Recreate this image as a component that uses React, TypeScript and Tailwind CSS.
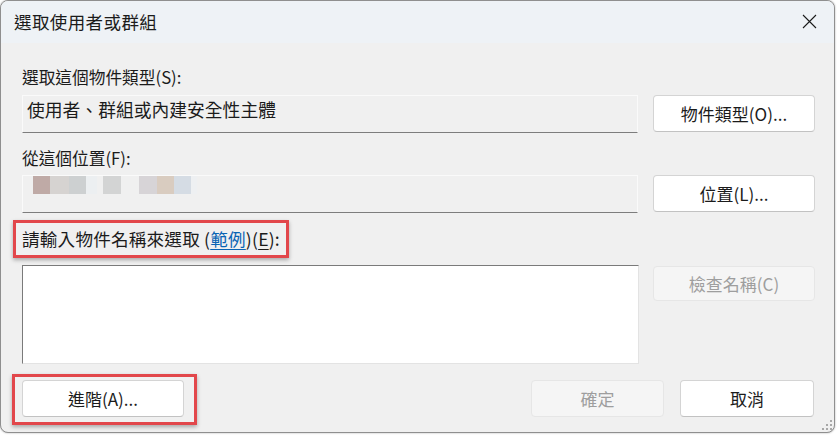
import React from 'react';

const FONT = "font-['Segoe_UI','Noto_Sans_CJK_TC','Noto_Sans',sans-serif]";

const blurBlocks: { w: number; c: string; gap?: number }[] = [
  { w: 17, c: '#bfaaa6' },
  { w: 19, c: '#d6d3d1' },
  { w: 17, c: '#cdd0d1' },
  { w: 11, c: '#eceff1' },
  { w: 6, c: 'transparent' },
  { w: 18, c: '#d3d4d4' },
  { w: 18, c: 'transparent' },
  { w: 18, c: '#d7d4d7' },
  { w: 17, c: '#d9ccc0' },
  { w: 17, c: '#d5dce4' },
  { w: 6, c: '#eef0f2' },
];

function Button({
  children,
  disabled,
  className,
}: {
  children: React.ReactNode;
  disabled?: boolean;
  className?: string;
}): React.JSX.Element {
  return (
    <button
      type="button"
      className={
        'flex items-center justify-center rounded-[4px] border text-[17px] leading-none ' +
        (disabled
          ? 'bg-[#f5f5f5] border-[#e6e6e6] text-[#9e9e9e] '
          : 'bg-white border-[#d4d4d4] border-b-[#c2c2c2] text-[#1b1b1b] ') +
        (className ?? '')
      }
    >
      {children}
    </button>
  );
}

export default function App(): React.JSX.Element {
  return (
    <div className="min-h-screen bg-white">
      <div
        className={`${FONT} relative w-[835px] h-[433px] rounded-[8px] border border-[#8f8f8f] bg-[#f0f0f0] overflow-hidden flex flex-col text-[#1b1b1b] shadow-[0_0_2px_rgba(0,0,0,0.35)]`}
      >
        {/* title bar */}
        <div className="h-[42px] bg-[#eef2f6] flex items-center justify-between pl-[13px] pr-[17px] pb-[1px]">
          <span className="text-[17.5px] leading-none tracking-[0.4px]">選取使用者或群組</span>
          <svg width="15" height="15" viewBox="0 0 15 15" className="text-[#1b1b1b]">
            <path d="M1 1 L14 14 M14 1 L1 14" stroke="currentColor" strokeWidth="1.1" fill="none" />
          </svg>
        </div>

        <div className="flex-1 pl-[21px] pt-[22px] flex flex-col">
          {/* object type */}
          <div className="h-[24px] leading-[24px] text-[16.7px]">選取這個物件類型(S):</div>
          <div className="mt-[6px] flex items-start">
            <div className="w-[616px] h-[38px] border border-[#fafafa] border-b-[#7d7d7d] pl-[4px] pt-[1px] text-[17.8px] leading-[24px]">
              使用者、群組或內建安全性主體
            </div>
            <Button className="ml-[15px] w-[162px] h-[37px]">物件類型(O)...</Button>
          </div>

          {/* location */}
          <div className="mt-[13px] h-[24px] leading-[24px] text-[16.7px]">從這個位置(F):</div>
          <div className="mt-[5px] flex items-start">
            <div className="w-[616px] h-[38px] border border-[#fafafa] border-b-[#7d7d7d] pl-[10px] flex items-start">
              <div className="flex h-[18px]">
                {blurBlocks.map((b, i) => (
                  <div key={i} className="h-full" style={{ width: b.w, background: b.c }} />
                ))}
              </div>
            </div>
            <Button className="ml-[15px] w-[162px] h-[37px]">位置(L)...</Button>
          </div>

          {/* names */}
          <div className="mt-[14px] h-[24px] flex">
            <div className="relative leading-[24px] text-[17.6px] tracking-[0.2px]">
              請輸入物件名稱來選取&nbsp;(
              <span className="text-[#0a64b4] underline underline-offset-[3px]">範例</span>)(
              <span className="underline underline-offset-[3px]">E</span>):
              <span className="pointer-events-none absolute -left-[9px] -right-[9px] -top-[7px] -bottom-[7px] border-[3px] border-[#e2474b] shadow-[0_2px_4px_rgba(0,0,0,0.3)]" />
            </div>
          </div>
          <div className="mt-[14px] flex items-start">
            <div className="w-[617px] h-[99px] bg-white border border-[#7a7a7a] border-r-[#e3e3e3] border-b-[#e3e3e3]" />
            <Button disabled className="ml-[14px] mt-[1px] w-[162px] h-[35px]">
              檢查名稱(C)
            </Button>
          </div>

          {/* bottom buttons */}
          <div className="mt-[16px] flex items-start">
            <div className="relative">
              <Button className="w-[162px] h-[37px]">進階(A)...</Button>
              <span className="pointer-events-none absolute -left-[10px] -right-[13px] -top-[6px] -bottom-[8px] border-[3px] border-[#e2474b] shadow-[0_2px_4px_rgba(0,0,0,0.3)]" />
            </div>
            <Button disabled className="ml-[347px] w-[133px] h-[37px]">
              確定
            </Button>
            <Button className="ml-[16px] w-[134px] h-[37px]">取消</Button>
          </div>
        </div>

        {/* resize grip */}
        <svg width="12" height="12" viewBox="0 0 12 12" className="absolute right-[1px] bottom-[1px]">
          <g fill="#a8a8a8">
            <rect x="9" y="1" width="2" height="2" />
            <rect x="5" y="5" width="2" height="2" />
            <rect x="9" y="5" width="2" height="2" />
            <rect x="1" y="9" width="2" height="2" />
            <rect x="5" y="9" width="2" height="2" />
            <rect x="9" y="9" width="2" height="2" />
          </g>
        </svg>
      </div>
    </div>
  );
}
